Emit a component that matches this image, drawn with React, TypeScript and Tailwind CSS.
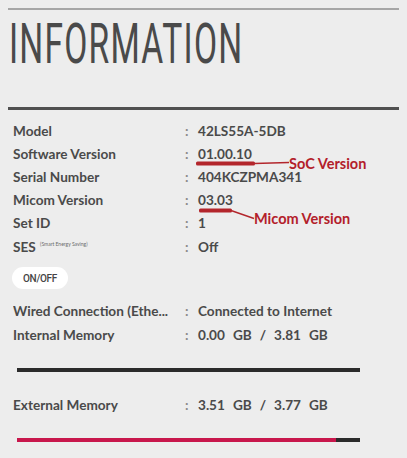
import React from "react";

type Row = { label: React.ReactNode; value: React.ReactNode };

const InfoRow = ({ label, value, h = "h-[23px]" }: { label: React.ReactNode; value: React.ReactNode; h?: string }) => (
  <div className={`flex items-center ${h} pl-[13px]`}>
    <div className="w-[172px] whitespace-nowrap overflow-hidden">{label}</div>
    <div className="w-[13px] text-[#8a8a8a]">:</div>
    <div className="whitespace-nowrap">{value}</div>
  </div>
);

export default function App() {
  const top: Row[] = [
    { label: "Model", value: "42LS55A-5DB" },
    { label: "Software Version", value: "01.00.10" },
    { label: "Serial Number", value: "404KCZPMA341" },
    { label: "Micom Version", value: "03.03" },
    { label: "Set ID", value: "1" },
  ];
  const used = 3.51;
  const total = 3.77;
  return (
    <div className="relative w-[407px] h-[458px] overflow-hidden bg-[#ededed] text-[#4a4a4a] text-[13.6px] font-bold font-['Lato','Noto_Sans',sans-serif]">
      <div className="pt-[8px] px-[8px]">
        <div className="h-[2px] bg-[#a6a6a6]" />
        <div className="mt-[6px] h-[56px] pl-[1px]">
          <div className="origin-left scale-x-[0.6] whitespace-nowrap font-['Roboto',sans-serif] font-normal tracking-[2px] text-[56px] leading-[56px] text-[#4a4a4a]">
            INFORMATION
          </div>
        </div>
        <div className="mt-[35px] h-[3px] bg-[#505050]" />
      </div>

      <div className="mt-[10px]">
        {top.map((r, i) => (
          <InfoRow key={i} label={r.label} value={r.value} />
        ))}
        <div className="mt-[1px]">
          <InfoRow
            label={
              <span>
                SES{" "}
                <span className="relative top-[-6px] ml-[1px] text-[5px] font-normal text-[#6a6a6a]">(Smart Energy Saving)</span>
              </span>
            }
            value="Off"
          />
        </div>
        <div className="mt-[8px] pl-[12px]">
          <div className="flex h-[22px] w-[56px] items-center justify-center rounded-full bg-white font-['Roboto',sans-serif] text-[10px] font-medium tracking-[-0.3px] text-[#444]">
            ON/OFF
          </div>
        </div>
        <div className="mt-[10px]">
          <InfoRow h="h-[24px]" label="Wired Connection (Ethe..." value="Connected to Internet" />
          <InfoRow
            h="h-[24px]"
            label="Internal Memory"
            value={
              <span className="flex gap-[8px]">
                <span>0.00</span>
                <span>GB</span>
                <span>/</span>
                <span>3.81</span>
                <span>GB</span>
              </span>
            }
          />
        </div>
        <div className="mt-[21px] ml-[17px] h-[4px] w-[343px] bg-[#2b2b2b]" />
        <div className="mt-[21px]">
          <InfoRow
            h="h-[24px]"
            label="External Memory"
            value={
              <span className="flex gap-[8px]">
                <span>3.51</span>
                <span>GB</span>
                <span>/</span>
                <span>3.77</span>
                <span>GB</span>
              </span>
            }
          />
        </div>
        <div className="mt-[21px] ml-[17px] h-[4px] w-[343px] bg-[#2b2b2b]">
          <div className="h-full bg-[#c8174c]" style={{ width: `${(used / total) * 100}%` }} />
        </div>
      </div>

      {/* annotations */}
      <svg className="pointer-events-none absolute left-0 top-0" width="407" height="458">
        <rect x="196" y="161.5" width="59" height="4" rx="1.5" fill="#b3262c" />
        <line x1="254" y1="163.5" x2="289" y2="162.5" stroke="#b3262c" strokeWidth="1.5" />
        <rect x="199" y="208.5" width="33" height="4" rx="1.5" fill="#b3262c" />
        <line x1="231" y1="210.5" x2="254" y2="218.5" stroke="#b3262c" strokeWidth="1.5" />
      </svg>
      <div className="absolute left-[289px] top-[155px] leading-[18px] text-[14.5px] font-bold text-[#b3202a]">SoC Version</div>
      <div className="absolute left-[254px] top-[210px] leading-[18px] text-[14.5px] font-bold text-[#b3202a]">Micom Version</div>
    </div>
  );
}
